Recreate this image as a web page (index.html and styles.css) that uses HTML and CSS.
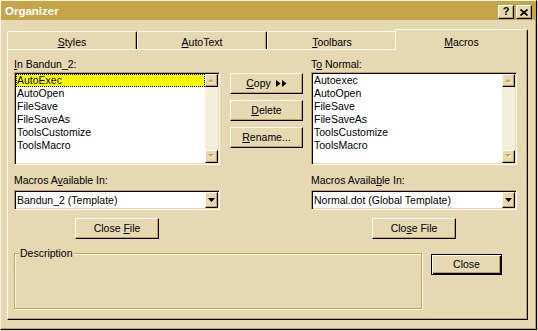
FILE: index.html
```html
<!DOCTYPE html>
<html>
<head>
<meta charset="utf-8">
<title>Organizer</title>
<link rel="stylesheet" href="styles.css">
</head>
<body>
<div class="window">
  <div class="titlebar">
    <span class="title">Organizer</span>
    <div class="tb-buttons">
      <span class="tb-btn help">?</span>
      <span class="tb-btn"><svg width="8" height="7" viewBox="0 0 8 7"><path d="M0.5 0.5 L7.5 6.5 M7.5 0.5 L0.5 6.5" stroke="#000" stroke-width="1.6" fill="none"/></svg></span>
    </div>
  </div>

  <div class="tabs">
    <div class="tab"><u>S</u>tyles</div>
    <div class="tab"><u>A</u>utoText</div>
    <div class="tab"><u>T</u>oolbars</div>
    <div class="tab active"><u>M</u>acros</div>
  </div>

  <div class="panel">
    <div class="columns">
      <div class="col">
        <div class="label"><u>I</u>n Bandun_2:</div>
        <div class="listbox">
          <ul class="items">
            <li class="selected">AutoExec</li>
            <li>AutoOpen</li>
            <li>FileSave</li>
            <li>FileSaveAs</li>
            <li>ToolsCustomize</li>
            <li>ToolsMacro</li>
          </ul>
          <div class="scrollbar">
            <span class="sb-btn"><svg width="7" height="5" viewBox="0 0 7 5"><polygon points="1,5 4,2 7,5" fill="#fffbef"/><polygon points="0,4 3,1 6,4" fill="#c5a44c"/></svg></span>
            <span class="sb-track"></span>
            <span class="sb-btn"><svg width="7" height="5" viewBox="0 0 7 5"><polygon points="1,1 7,1 4,4" fill="#fffbef"/><polygon points="0,0 6,0 3,3" fill="#c5a44c"/></svg></span>
          </div>
        </div>
        <div class="label label-gap">Macros A<u>v</u>ailable In:</div>
        <div class="combo">
          <span class="combo-text">Bandun_2 (Template)</span>
          <span class="combo-btn"><svg width="7" height="4" viewBox="0 0 7 4"><polygon points="0,0 7,0 3.5,4" fill="#000"/></svg></span>
        </div>
        <div class="btn-row"><div class="btn wide"><span>Close <u>F</u>ile</span></div></div>
      </div>

      <div class="mid">
        <div class="btn"><span><u>C</u>opy</span><svg class="copy-arrows" width="11" height="7" viewBox="0 0 11 7"><polygon points="0,0 4.5,3.5 0,7" fill="#000"/><polygon points="6,0 10.5,3.5 6,7" fill="#000"/></svg></div>
        <div class="btn"><span><u>D</u>elete</span></div>
        <div class="btn"><span><u>R</u>ename...</span></div>
      </div>

      <div class="col">
        <div class="label">T<u>o</u> Normal:</div>
        <div class="listbox">
          <ul class="items">
            <li>Autoexec</li>
            <li>AutoOpen</li>
            <li>FileSave</li>
            <li>FileSaveAs</li>
            <li>ToolsCustomize</li>
            <li>ToolsMacro</li>
          </ul>
          <div class="scrollbar">
            <span class="sb-btn"><svg width="7" height="5" viewBox="0 0 7 5"><polygon points="1,5 4,2 7,5" fill="#fffbef"/><polygon points="0,4 3,1 6,4" fill="#c5a44c"/></svg></span>
            <span class="sb-track"></span>
            <span class="sb-btn"><svg width="7" height="5" viewBox="0 0 7 5"><polygon points="1,1 7,1 4,4" fill="#fffbef"/><polygon points="0,0 6,0 3,3" fill="#c5a44c"/></svg></span>
          </div>
        </div>
        <div class="label label-gap">Macros Availa<u>b</u>le In:</div>
        <div class="combo">
          <span class="combo-text">Normal.dot (Global Template)</span>
          <span class="combo-btn"><svg width="7" height="4" viewBox="0 0 7 4"><polygon points="0,0 7,0 3.5,4" fill="#000"/></svg></span>
        </div>
        <div class="btn-row"><div class="btn wide"><span>Clo<u>s</u>e File</span></div></div>
      </div>
    </div>

    <div class="bottom">
      <div class="desc"><span class="desc-label">Description</span></div>
      <div class="btn default"><span>Close</span></div>
    </div>
  </div>
</div>
</body>
</html>
```

FILE: styles.css
```css
html, body {
  margin: 0;
  padding: 0;
  background: #e5d8b2;
}

body {
  font-family: "Liberation Sans", Arial, sans-serif;
  font-size: 10.5px;
  line-height: 13px;
  color: #000;
}

u {
  text-decoration: underline;
  text-underline-offset: 1px;
}

.window {
  box-sizing: border-box;
  width: 537px;
  height: 330px;
  background: #e5d8b2;
  border-top: 1px solid #f7f1de;
  border-left: 1px solid #f7f1de;
  border-right: 1px solid #000;
  border-bottom: 1px solid #000;
  box-shadow: inset -1px -1px 0 #c5a44c;
}

/* title bar */
.titlebar {
  height: 19px;
  background: #c5a54a;
  display: flex;
  justify-content: space-between;
  align-items: flex-start;
  padding: 0 4px 0 4px;
}

.title {
  margin-top: 4px;
  color: #fff;
  font-weight: bold;
  font-size: 11.5px;
  line-height: 13px;
}

.tb-buttons {
  display: flex;
  gap: 2px;
  margin-top: 4px;
}

.tb-btn {
  box-sizing: border-box;
  width: 16px;
  height: 14px;
  background: #e5d8b2;
  border: 1px solid;
  border-color: #fffbef #000 #000 #fffbef;
  box-shadow: inset -1px -1px 0 #c5a44c;
  display: flex;
  align-items: center;
  justify-content: center;
}

.tb-btn.help {
  font-weight: bold;
  font-size: 11px;
  line-height: 11px;
  padding-bottom: 1px;
}

/* tabs */
.tabs {
  display: flex;
  align-items: flex-end;
  height: 20px;
  margin: 9px 0 0 6px;
}

.tab {
  box-sizing: border-box;
  width: 130px;
  height: 18px;
  padding-top: 4px;
  text-align: center;
  background: #e5d8b2;
  border: 1px solid;
  border-bottom: none;
  border-color: #fffbef #000 transparent #fffbef;
  border-radius: 2px 2px 0 0;
  box-shadow: inset -1px 0 0 #c5a44c;
}

.tab.active {
  width: 133px;
  height: 21px;
  padding-top: 6px;
  margin-left: -2px;
  margin-bottom: -1px;
  position: relative;
  z-index: 1;
}

/* panel */
.panel {
  box-sizing: border-box;
  width: 521px;
  height: 271px;
  margin-left: 6px;
  padding: 8px 0 0 6px;
  border-top: 1px solid #fffbef;
  border-left: 1px solid #fffbef;
  border-right: 1px solid #000;
  border-bottom: 1px solid #000;
  box-shadow: inset -1px -1px 0 #c5a44c;
}

.columns {
  display: flex;
}

.col {
  width: 206px;
  display: flex;
  flex-direction: column;
}

.mid {
  width: 73px;
  margin: 15px 8px 0 10px;
  display: flex;
  flex-direction: column;
  gap: 6px;
}

.label {
  height: 13px;
  white-space: nowrap;
}

.label-gap {
  margin-top: 9px;
}

/* list box */
.listbox {
  box-sizing: border-box;
  height: 93px;
  margin-top: 1px;
  display: flex;
  background: #fff;
  border: 1px solid;
  border-color: #c5a44c #fffbef #fffbef #c5a44c;
  box-shadow: inset 1px 1px 0 #000, inset -1px -1px 0 #e5d8b2;
  padding: 1px;
}

.items {
  list-style: none;
  margin: 0;
  padding: 0;
  flex: 1;
}

.items li {
  height: 13px;
  padding-left: 1px;
  white-space: nowrap;
}

.items li.selected {
  background: #ffff00;
  outline: 1px dotted #000;
  outline-offset: -1px;
}

.scrollbar {
  width: 13px;
  display: flex;
  flex-direction: column;
  background: #f3eedc;
}

.sb-btn {
  box-sizing: border-box;
  width: 13px;
  height: 13px;
  background: #e5d8b2;
  border: 1px solid;
  border-color: #fffbef #000 #000 #fffbef;
  box-shadow: inset -1px -1px 0 #c5a44c;
  display: flex;
  align-items: center;
  justify-content: center;
}

.sb-track {
  flex: 1;
}

/* combo */
.combo {
  box-sizing: border-box;
  height: 20px;
  margin-top: 3px;
  display: flex;
  align-items: center;
  background: #fff;
  border: 1px solid;
  border-color: #c5a44c #fffbef #fffbef #c5a44c;
  box-shadow: inset 1px 1px 0 #000, inset -1px -1px 0 #e5d8b2;
  padding: 1px;
}

.combo-text {
  flex: 1;
  padding-left: 1px;
  white-space: nowrap;
}

.combo-btn {
  box-sizing: border-box;
  width: 13px;
  height: 16px;
  background: #e5d8b2;
  border: 1px solid;
  border-color: #fffbef #000 #000 #fffbef;
  box-shadow: inset -1px -1px 0 #c5a44c;
  display: flex;
  align-items: center;
  justify-content: center;
}

/* buttons */
.btn {
  box-sizing: border-box;
  height: 21px;
  background: #e5d8b2;
  border: 1px solid;
  border-color: #fffbef #000 #000 #fffbef;
  box-shadow: inset -1px -1px 0 #c5a44c;
  display: flex;
  align-items: center;
  justify-content: center;
  white-space: nowrap;
}

.copy-arrows {
  margin-left: 5px;
}

.btn-row {
  margin-top: 8px;
  display: flex;
  justify-content: center;
}

.btn.wide {
  width: 84px;
}

/* bottom */
.bottom {
  display: flex;
  align-items: flex-start;
  margin-top: 8px;
}

.desc {
  box-sizing: border-box;
  position: relative;
  width: 408px;
  height: 56px;
  margin-top: 6px;
  border: 1px solid #c5a44c;
  box-shadow: inset 1px 1px 0 #fffbef, 1px 1px 0 #fffbef;
}

.desc-label {
  position: absolute;
  top: -7px;
  left: 4px;
  padding: 0 1px;
  background: #e5d8b2;
}

.btn.default {
  width: 71px;
  margin: 7px 0 0 9px;
  border: 1px solid #000;
  box-shadow: inset 1px 1px 0 #fffbef, inset -1px -1px 0 #000, inset -2px -2px 0 #c5a44c;
}
```
